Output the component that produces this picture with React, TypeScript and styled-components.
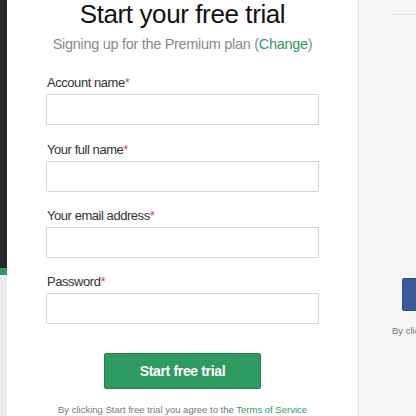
import styled, { createGlobalStyle } from 'styled-components';

const GlobalStyle = createGlobalStyle`
  html, body {
    margin: 0;
    padding: 0;
    background: #ffffff;
    font-family: "Liberation Sans", Arial, sans-serif;
  }
`;

const Page = styled.div`
  display: flex;
  width: 416px;
  height: 416px;
  overflow: hidden;
`;

const Rail = styled.div`
  width: 7px;
  display: flex;
  flex-direction: column;
`;

const RailPart = styled.div<{ $tone: string; $h?: number }>`
  background: ${p => p.$tone};
  height: ${p => (p.$h ? `${p.$h}px` : 'auto')};
  flex: ${p => (p.$h ? '0 0 auto' : '1')};
`;

const Main = styled.div`
  width: 351px;
  flex: 0 0 auto;
  background: #fff;
  display: flex;
  flex-direction: column;
  align-items: center;
`;

const Title = styled.h1`
  margin: -1.3px 0 0;
  font-size: 26px;
  line-height: 30px;
  font-weight: normal;
  letter-spacing: -0.4px;
  color: #111;
`;

const Subtitle = styled.p`
  margin: 6.3px 0 0;
  font-size: 14.5px;
  line-height: 18px;
  letter-spacing: -0.3px;
  color: #8a8a8a;
`;

const GreenLink = styled.a`
  color: #3a9763;
  text-decoration: none;
`;

const Form = styled.form`
  width: 273px;
  margin-top: 21.4px;
  display: flex;
  flex-direction: column;
  gap: 15.3px;
`;

const Field = styled.div`
  display: flex;
  flex-direction: column;
  gap: 3px;
`;

const Label = styled.label`
  font-size: 13px;
  line-height: 17px;
  letter-spacing: -0.45px;
  color: #333;
  padding-left: 1px;
`;

const Req = styled.span`
  color: #d24b3e;
`;

const Input = styled.input`
  box-sizing: border-box;
  width: 100%;
  height: 31px;
  margin: 0;
  border: 1px solid #d4d4d4;
  border-radius: 1px;
  background: #fff;
  outline: none;
`;

const Submit = styled.button`
  margin-top: 28.6px;
  width: 157px;
  height: 36px;
  border: 1px solid #23804d;
  border-radius: 2px;
  background: #2f9a60;
  color: #fff;
  font-family: "Liberation Sans", Arial, sans-serif;
  font-size: 14px;
  font-weight: bold;
  letter-spacing: -0.35px;
  cursor: pointer;
`;

const Terms = styled.p`
  margin: 14.7px 0 0;
  font-size: 9.5px;
  line-height: 12px;
  color: #777;
  white-space: nowrap;
`;

const Side = styled.aside`
  flex: 1;
  background: #f5f5f5;
  border-left: 1px solid #e3e3e3;
  padding: 14px 0 0 33px;
  display: flex;
  flex-direction: column;
  overflow: hidden;
`;

const Divider = styled.div`
  height: 1px;
  background: #e6e6e6;
`;

const FacebookButton = styled.div`
  margin: 263px 0 0 10px;
  width: 200px;
  height: 31px;
  flex: 0 0 auto;
  border-radius: 2px;
  background: #3b5998;
  border: 1px solid #2f4a85;
`;

const SideNote = styled.p`
  margin: 14px 0 0;
  font-size: 9.5px;
  line-height: 12px;
  color: #777;
  white-space: nowrap;
`;

const fields = ['Account name', 'Your full name', 'Your email address', 'Password'];

export default function App() {
  return (
    <>
      <GlobalStyle />
      <Page>
        <Rail>
          <RailPart $tone="#27292d" $h={268} />
          <RailPart $tone="#2e9b62" $h={7} />
          <RailPart $tone="#ececec" />
        </Rail>
        <Main>
          <Title>Start your free trial</Title>
          <Subtitle>
            Signing up for the Premium plan (<GreenLink href="#">Change</GreenLink>)
          </Subtitle>
          <Form onSubmit={e => e.preventDefault()}>
            {fields.map(name => (
              <Field key={name}>
                <Label>
                  {name}
                  <Req>*</Req>
                </Label>
                <Input type={name === 'Password' ? 'password' : 'text'} />
              </Field>
            ))}
          </Form>
          <Submit type="button">Start free trial</Submit>
          <Terms>
            By clicking Start free trial you agree to the <GreenLink href="#">Terms of Service</GreenLink>
          </Terms>
        </Main>
        <Side>
          <Divider />
          <FacebookButton />
          <SideNote>By clicking Sign up with Facebook you agree to the Terms</SideNote>
        </Side>
      </Page>
    </>
  );
}
